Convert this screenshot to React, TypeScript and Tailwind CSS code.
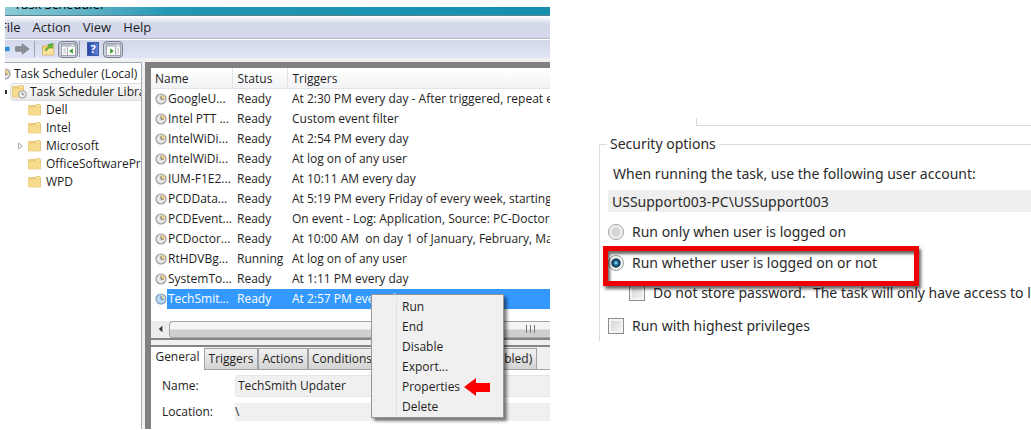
import React from "react";

type Task = { name: string; status: string; trigger: string };

const tasks: Task[] = [
  { name: "GoogleU...", status: "Ready", trigger: "At 2:30 PM every day - After triggered, repeat every 1 hour" },
  { name: "Intel PTT ...", status: "Ready", trigger: "Custom event filter" },
  { name: "IntelWiDi...", status: "Ready", trigger: "At 2:54 PM every day" },
  { name: "IntelWiDi...", status: "Ready", trigger: "At log on of any user" },
  { name: "IUM-F1E2...", status: "Ready", trigger: "At 10:11 AM every day" },
  { name: "PCDData...", status: "Ready", trigger: "At 5:19 PM every Friday of every week, starting 1/1" },
  { name: "PCDEvent...", status: "Ready", trigger: "On event - Log: Application, Source: PC-Doctor" },
  { name: "PCDoctor...", status: "Ready", trigger: "At 10:00 AM  on day 1 of January, February, March" },
  { name: "RtHDVBg...", status: "Running", trigger: "At log on of any user" },
  { name: "SystemTo...", status: "Ready", trigger: "At 1:11 PM every day" },
  { name: "TechSmit...", status: "Ready", trigger: "At 2:57 PM every day" },
];

const folders = ["Dell", "Intel", "Microsoft", "OfficeSoftwareProtection", "WPD"];
const menuItems = ["Run", "End", "Disable", "Export...", "Properties", "Delete"];

function Clock({ tint = false }: { tint?: boolean }) {
  return (
    <svg viewBox="0 0 12 12" className="size-3 shrink-0" aria-hidden="true">
      <circle cx="6" cy="6" r="5" fill={tint ? "#b9d8f4" : "#e6e6e6"} stroke={tint ? "#7d9dbd" : "#9c9c9c"} strokeWidth="1.2" />
      <path d="M6 6V2a4 4 0 0 1 4 4z" fill={tint ? "#d6dfb5" : "#f0d28a"} />
      <path d="M6 2.8V6.3H8.6" fill="none" stroke={tint ? "#5a7896" : "#777"} strokeWidth="1" />
    </svg>
  );
}

function Folder() {
  return (
    <svg viewBox="0 0 13 12" className="h-3 w-[13px] shrink-0" aria-hidden="true">
      <path d="M.6 1.6h6.4l1-1.2h3.8l.7 1v9.6H.6z" fill="#efcd74" stroke="#dcb75e" strokeWidth=".6" />
      <path d="M1 3.6h11v7.1H1z" fill="#f8dc8e" />
      <path d="M8.4 1.5h2.8v1.2H8.4z" fill="#fff8dc" />
    </svg>
  );
}

function LibraryFolder() {
  return (
    <svg viewBox="0 0 15 14" className="h-[14px] w-[15px] shrink-0" aria-hidden="true">
      <path d="M.6 1.6h5.6l1-1.2h3.6l.8 1V12H.6z" fill="#efcd74" stroke="#dcb75e" strokeWidth=".6" />
      <path d="M1 4h10.2V11.6H1z" fill="#f8dc8e" />
      <path d="M7.6 1.5h2.6v1.2H7.6z" fill="#fff8dc" />
      <circle cx="10.4" cy="9.4" r="3.8" fill="#ededed" stroke="#8f8f8f" strokeWidth=".9" />
      <path d="M10.4 7.2v2.4h1.8" fill="none" stroke="#6a6a6a" strokeWidth=".8" />
    </svg>
  );
}

function PaneIcon({ flip = false }: { flip?: boolean }) {
  return (
    <svg viewBox="0 0 15 13" className="h-[13px] w-[15px]" aria-hidden="true">
      <rect x=".5" y=".5" width="14" height="12" fill="#fafafa" stroke="#a0a4ac" />
      <path d="M1 1h13v2.6H1z" fill="#b4bac6" />
      <path d="M10.5 2.2h2.5" stroke="#fff" strokeWidth="1" />
      {flip ? (
        <>
          <path d="M9.5 4v8" stroke="#a9adb5" />
          <path d="M10.8 6h2.2M10.8 8h2.2M10.8 10h2.2" stroke="#a5a9b0" strokeWidth=".8" />
          <path d="M4.2 5.4 7.8 8.1 4.2 10.8z" fill="#33a02c" />
        </>
      ) : (
        <>
          <path d="M6.5 4v8" stroke="#a9adb5" />
          <path d="M2.4 6H5M2.4 8H5M2.4 10H5" stroke="#a5a9b0" strokeWidth=".8" />
          <path d="M11.8 5.4 8.2 8.1 11.8 10.8z" fill="#33a02c" />
        </>
      )}
    </svg>
  );
}

const toggleClass = "flex h-[17px] w-5 items-center justify-center rounded-sm border border-[#7b808c] bg-[#cbd0de]";

function Toolbar() {
  return (
    <div className="flex h-[19px] shrink-0 items-center border-t border-white bg-linear-to-b from-[#d3d8eb] to-[#dfe4f6]">
      <button aria-label="Back" className="w-[5px]">
        <svg viewBox="0 0 5 8" className="h-2 w-[5px]" aria-hidden="true">
          <path d="M0 1.8h4.6v4.4H0z" fill="#2f8fd0" />
        </svg>
      </button>
      <button aria-label="Forward" className="ml-[5px]">
        <svg viewBox="0 0 15 12" className="h-3 w-[15px]" aria-hidden="true">
          <path d="M.7 3.8h6.6V.9L14 6l-6.7 5.1V8.2H.7z" fill="#8c8f94" stroke="#7b7e83" strokeWidth=".9" />
        </svg>
      </button>
      <span className="mx-1 h-4 w-px bg-[#9da2b3]" />
      <button aria-label="Up one level" className="ml-[3px]">
        <svg viewBox="0 0 13 14" className="h-[14px] w-[13px]" aria-hidden="true">
          <path d="M.6 4h4l1-1.4h6.2V13H.6z" fill="#f3d271" stroke="#c9a54e" strokeWidth=".7" />
          <path d="M1 7h10.5v5.6H1z" fill="#fbe39b" />
          <path d="M3 8.8C3.6 6.6 5.3 5 7 4.2L5.8 2.6 11 1.2 10 6.4 8.6 5.4C6.8 6 5.2 7.2 4.4 9z" fill="#5cb53b" stroke="#3d8c2b" strokeWidth=".4" />
        </svg>
      </button>
      <button aria-label="Show console tree" className={`ml-[3px] ${toggleClass}`}>
        <PaneIcon />
      </button>
      <span className="mx-px h-4 w-px bg-[#9da2b3]" />
      <button aria-label="Help" className="ml-[6px] flex h-[14px] w-3 items-center justify-center border border-[#3d59a5] bg-linear-to-r from-[#2846a5] to-[#5f83d8] text-[11px] leading-3 font-bold text-white">
        ?
      </button>
      <button aria-label="Show action pane" className={`ml-1 ${toggleClass}`}>
        <PaneIcon flip />
      </button>
    </div>
  );
}

function Tree() {
  return (
    <nav aria-label="Console tree" className="w-[137px] shrink-0 overflow-hidden border-t border-r border-[#a3abb8] bg-white pt-px whitespace-nowrap">
      <div className="-ml-[6px] flex h-[19px] items-center gap-[3px]">
        <Clock />
        <span>Task Scheduler (Local)</span>
      </div>
      <div className="flex h-[18px] items-center">
        <svg viewBox="0 0 4 6" className="h-[6px] w-1 shrink-0" aria-hidden="true">
          <path d="M0 1h2v4H0z" fill="#333" />
        </svg>
        <button className="ml-px flex h-[18px] flex-1 items-center gap-[3px] rounded-l-sm border border-r-0 border-[#dedede] bg-linear-to-b from-[#fafafa] to-[#e9e9e9] pl-px">
          <LibraryFolder />
          <span>Task Scheduler Library</span>
        </button>
      </div>
      <ul>
        {folders.map((f) => (
          <li key={f} className="flex h-[18px] items-center pl-[13px]">
            <span className="flex w-[10px] shrink-0">
              {f === "Microsoft" && (
                <svg viewBox="0 0 5 8" className="h-2 w-[5px]" aria-hidden="true">
                  <path d="M.6 1 4.3 4 .6 7z" fill="#fff" stroke="#a3a3a3" strokeWidth=".9" />
                </svg>
              )}
            </span>
            <button className="flex items-center gap-[5px]">
              <Folder />
              <span>{f}</span>
            </button>
          </li>
        ))}
      </ul>
    </nav>
  );
}

function TaskTable() {
  return (
    <div className="overflow-hidden">
      <table className="w-full table-fixed border-collapse text-left whitespace-pre">
        <thead>
          <tr className="h-5 bg-linear-to-b from-white to-[#f2f3f5]">
            <th className="w-[81px] border-r border-b border-[#e2e4e7] p-0 pt-[2px] pl-1 font-normal">Name</th>
            <th className="w-[55px] border-r border-b border-[#e2e4e7] p-0 pt-[2px] pl-[5px] font-normal">Status</th>
            <th className="border-b border-[#e2e4e7] p-0 pt-[2px] pl-[5px] font-normal">Triggers</th>
          </tr>
        </thead>
        <tbody>
          {tasks.map((t, i) => {
            const selected = i === tasks.length - 1;
            const cell = selected ? "bg-[#3399ff] text-white" : "";
            return (
              <tr key={i} className="h-5">
                <td className="p-0">
                  <div className="flex h-5 items-center pl-1">
                    <Clock tint={selected} />
                    <span className={`h-5 flex-1 overflow-hidden pl-px leading-5 ${cell}`}>{t.name}</span>
                  </div>
                </td>
                <td className={`p-0 pl-[5px] ${cell}`}>{t.status}</td>
                <td className={`overflow-hidden p-0 pl-[5px] ${cell}`}>{t.trigger}</td>
              </tr>
            );
          })}
        </tbody>
      </table>
    </div>
  );
}

function ScrollBar() {
  return (
    <div className="mt-3 flex h-[17px] bg-[#ececec]">
      <button aria-label="Scroll left" className="flex w-[18px] items-center justify-center">
        <svg viewBox="0 0 5 8" className="h-2 w-[5px]" aria-hidden="true">
          <path d="M4.4 .8v6.4L.8 4z" fill="#333" />
        </svg>
      </button>
      <div className="flex flex-1 items-center justify-end rounded-l-sm border border-r-0 border-[#a5a5a5] bg-linear-to-b from-[#f4f4f4] from-45% to-[#cfcfcf] to-55% pr-[15px]">
        <span className="flex gap-[3px]">
          <i className="h-2 w-px bg-[#777]" />
          <i className="h-2 w-px bg-[#777]" />
          <i className="h-2 w-px bg-[#777]" />
        </span>
      </div>
    </div>
  );
}

const tabClass = "h-[21px] border border-b-0 border-[#a0a2a8] bg-linear-to-b from-[#f2f2f2] to-[#d3d3d3] text-center";

function Details() {
  return (
    <section className="flex-1 overflow-hidden bg-white">
      <div role="tablist" className="flex h-[23px] items-end border-b border-[#a0a2a8] bg-[#f0f0f0] whitespace-nowrap">
        <button role="tab" aria-selected="true" className="-mb-px h-[23px] w-[53px] bg-white pb-[2px]">General</button>
        <button role="tab" className={`w-[54px] ${tabClass}`}>Triggers</button>
        <button role="tab" className={`w-[50px] ${tabClass}`}>Actions</button>
        <button role="tab" className={`w-[68px] ${tabClass}`}>Conditions</button>
        <button role="tab" className={`w-[54px] ${tabClass}`}>Settings</button>
        <button role="tab" className={`w-[107px] ${tabClass}`}>History (disabled)</button>
      </div>
      <div className="flex flex-col gap-[6px] pt-[5px] pl-[11px]">
        <div className="flex items-center">
          <label htmlFor="task-name" className="w-[73px]">Name:</label>
          <input id="task-name" readOnly defaultValue="TechSmith Updater" className="h-[22px] min-w-0 flex-1 rounded-l-sm border border-r-0 border-[#dfe6ee] bg-[#f0f0f0] px-[2px] outline-none" />
        </div>
        <div className="flex items-center">
          <label htmlFor="task-location" className="w-[73px]">Location:</label>
          <input id="task-location" readOnly defaultValue="\" className="h-[18px] min-w-0 flex-1 bg-[#f0f0f0] outline-none" />
        </div>
      </div>
    </section>
  );
}

function ContextMenu() {
  return (
    <div role="menu" className="absolute top-[287px] left-[366px] w-[133px] border border-[#979797] bg-[#f0f0f0] pt-[2px] shadow-[3px_3px_3px_rgba(0,0,0,0.5)]">
      <div className="ml-6 border-l border-[#e2e3e3]">
        {menuItems.map((m) => (
          <button key={m} role="menuitem" className="flex h-5 w-full items-center gap-[3px] pl-[5px]">
            {m}
            {m === "Properties" && (
              <svg viewBox="0 0 28 18" className="h-[18px] w-7" aria-hidden="true">
                <path d="M1 9 13 0v5h14v9H13v4z" fill="#fb0000" />
              </svg>
            )}
          </button>
        ))}
      </div>
    </div>
  );
}

function SchedulerWindow() {
  return (
    <main className="relative mt-[7px] mb-px ml-[5px] flex min-w-0 flex-[545] flex-col overflow-hidden bg-[#f0f0f0] text-xs leading-4 text-[#1e1e1e]">
      <header className="flex h-[9px] shrink-0 items-end overflow-hidden border-b border-[#5c7f8c] bg-linear-to-r from-[#8ccbd6] via-[#1f97b5] via-30% to-[#168fae] pb-1 pl-[9px]">
        <h1 className="text-[13px] leading-[14px] text-black">Task Scheduler</h1>
      </header>
      <div className="flex h-[23px] shrink-0 items-center gap-3 border-b border-[#b7bac6] bg-linear-to-b from-white to-[#d3d8eb] to-35% text-[13px]">
        <button className="-ml-[5px]">File</button>
        <button>Action</button>
        <button>View</button>
        <button>Help</button>
      </div>
      <Toolbar />
      <div className="mt-1 flex min-h-0 flex-1">
        <Tree />
        <div className="ml-[3px] flex min-w-0 flex-1 flex-col border-t-[6px] border-l-[6px] border-[#808080]">
          <div className="bg-white">
            <TaskTable />
            <ScrollBar />
          </div>
          <div className="h-[9px] shrink-0 border-y-2 border-[#858585] bg-[#f0f0f0]" />
          <Details />
        </div>
      </div>
      <ContextMenu />
    </main>
  );
}

const radioClass =
  "size-4 shrink-0 appearance-none rounded-full border border-[#9c9d9d] bg-[radial-gradient(circle,#d4d4d4_0_35%,#f6f6f6_60%)] checked:bg-[radial-gradient(circle_at_50%_50%,#8fd3ee_0_6%,#1d6f9c_20%,#12354f_42%,#f4f4f4_52%)]";
const checkClass =
  "size-4 shrink-0 appearance-none border border-[#8e8f8f] bg-linear-to-br from-[#cfd2d5] to-[#f8f8f8] shadow-[inset_0_0_0_2px_#f4f4f4]";

function SecurityOptions() {
  return (
    <aside className="flex min-w-0 flex-[432] flex-col overflow-hidden pt-[118px] font-['Noto_Sans','Open_Sans',sans-serif] text-sm leading-5 whitespace-nowrap text-[#2a2a2a]">
      <div className="ml-[97px] h-2 shrink-0 border-b border-l border-[#dcdcdc]" />
      <fieldset className="mt-[8px] h-[207px] min-w-0 border-l border-[#dcdcdc]">
        <legend className="flex w-full items-center gap-[3px]">
          <span className="h-px w-[7px] bg-[#dcdcdc]" />
          <span>Security options</span>
          <span className="h-px flex-1 bg-[#dcdcdc]" />
        </legend>
        <div className="relative flex flex-col pl-2">
          <label htmlFor="account" className="mt-[10px] pl-[5px]">When running the task, use the following user account:</label>
          <input id="account" readOnly defaultValue="USSupport003-PC\USSupport003" className="mt-[6px] h-[22px] w-full bg-[#efefef] pl-1 outline-none" />
          <label className="mt-[10px] flex items-center gap-2">
            <input type="radio" name="logon" className={radioClass} />
            Run only when user is logged on
          </label>
          <label className="mt-[11px] flex items-center gap-2">
            <input type="radio" name="logon" defaultChecked className={radioClass} />
            Run whether user is logged on or not
          </label>
          <label className="mt-[10px] flex items-center gap-2 pl-[21px]">
            <input type="checkbox" className={checkClass} />
            <span className="whitespace-pre">Do not store password.  The task will only have access to local</span>
          </label>
          <label className="mt-[13px] flex items-center gap-2">
            <input type="checkbox" className={checkClass} />
            Run with highest privileges
          </label>
          <div className="pointer-events-none absolute top-[92px] left-[3px] h-10 w-[316px] border-[5px] border-[#ee0000] shadow-[2px_3px_3px_rgba(0,0,0,0.6),inset_2px_3px_3px_rgba(0,0,0,0.6)]" />
        </div>
      </fieldset>
    </aside>
  );
}

export default function App() {
  return (
    <div className="flex h-screen gap-[49px] overflow-hidden bg-white font-['Open_Sans','Noto_Sans',sans-serif]">
      <SchedulerWindow />
      <SecurityOptions />
    </div>
  );
}
